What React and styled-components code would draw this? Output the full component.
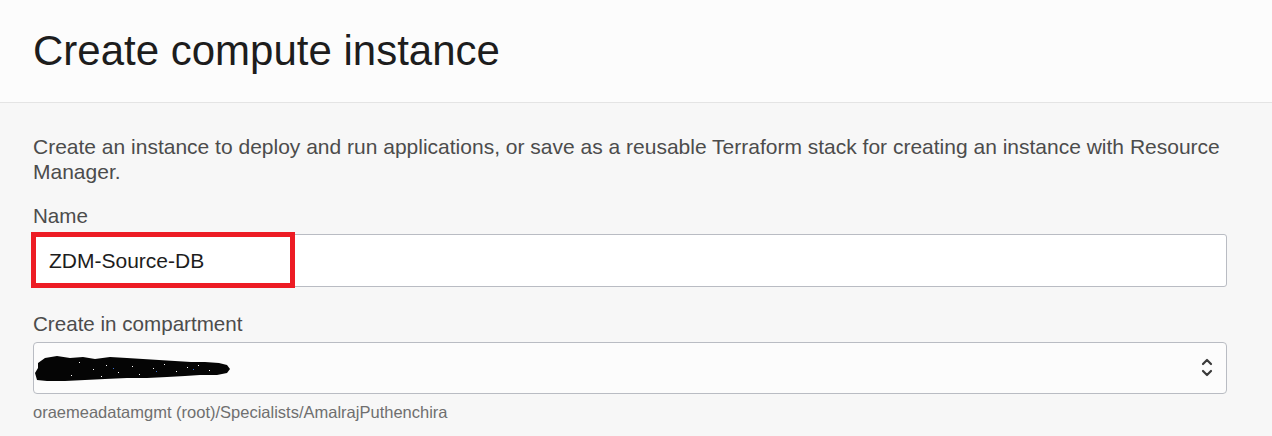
import React from "react";
import styled, { createGlobalStyle } from "styled-components";

const GlobalStyle = createGlobalStyle`
  html, body {
    margin: 0;
    padding: 0;
    background: #f7f7f7;
    font-family: "Liberation Sans", Arial, sans-serif;
  }
`;

const Page = styled.div`
  width: 1272px;
  height: 436px;
  overflow: hidden;
  background: #f7f7f7;
`;

const Header = styled.header`
  height: 102px;
  background: #fcfcfc;
  border-bottom: 1px solid #e4e4e4;
  display: flex;
  align-items: center;
  padding: 0 33px;

  h1 {
    margin: 0;
    font-size: 42px;
    font-weight: 400;
    color: #1d1d1d;
  }
`;

const Body = styled.main`
  padding: 31px 45px 0 33px;
`;

const Intro = styled.p`
  margin: 0 0 19px;
  font-size: 21px;
  line-height: 25px;
  color: #4c4c4c;
`;

const Field = styled.div`
  display: flex;
  flex-direction: column;
  margin-bottom: ${({ $gap }) => $gap || 0}px;
`;

const Label = styled.label`
  font-size: 20.6px;
  line-height: 25px;
  color: #4c4c4c;
  margin-bottom: 6px;
`;

const InputWrap = styled.div`
  position: relative;
`;

const TextInput = styled.input`
  box-sizing: border-box;
  width: 100%;
  height: 53px;
  border: 1px solid #b9bcc3;
  border-radius: 3px;
  background: #fff;
  padding: 0 15px;
  font-family: inherit;
  font-size: 21px;
  color: #1d1d1d;
  outline: none;
`;

const Highlight = styled.div`
  position: absolute;
  left: -2px;
  top: -2px;
  width: 264px;
  height: 56px;
  box-sizing: border-box;
  border: 5px solid #ed1c24;
  pointer-events: none;
`;

const SelectBox = styled.div`
  box-sizing: border-box;
  height: 52px;
  border: 1px solid #b9bcc3;
  border-radius: 4px;
  background: #fcfcfc;
  display: flex;
  align-items: center;
  justify-content: space-between;
  padding: 0 13px 0 1px;
`;

const Help = styled.div`
  margin-top: 8px;
  font-size: 16.5px;
  line-height: 20px;
  color: #6f6f6f;
`;

// redaction scribble over the compartment name
const Redacted = () => (
  <svg width="200" height="30" viewBox="0 0 200 30">
    <path
      d="M3 10 L10 5 L22 3 L35 5 L48 4 L60 6 L75 4 L92 5 L108 6 L124 7 L140 8 L156 9 L170 9 L184 10 L192 12 L195 16 L192 20 L182 22 L165 22 L150 23 L132 24 L112 25 L92 25 L70 26 L50 27 L30 28 L12 28 L2 27 L0 20 L3 15 Z"
      fill="#050505"
    />
    <g fill="#fcfcfc">
      <rect x="44" y="9" width="1" height="1" />
      <rect x="58" y="16" width="1" height="1" />
      <rect x="71" y="12" width="1" height="1" />
      <rect x="83" y="19" width="1" height="1" />
      <rect x="97" y="13" width="1" height="1" />
      <rect x="104" y="21" width="1" height="1" />
      <rect x="118" y="15" width="1" height="1" />
      <rect x="129" y="11" width="1" height="1" />
      <rect x="141" y="18" width="1" height="1" />
      <rect x="152" y="14" width="1" height="1" />
      <rect x="163" y="12" width="1" height="1" />
      <rect x="174" y="17" width="1" height="1" />
      <rect x="36" y="22" width="1" height="1" />
      <rect x="66" y="23" width="1" height="1" />
    </g>
    <g fill="#3b6fd0">
      <rect x="78" y="15" width="1" height="1" />
      <rect x="121" y="18" width="1" height="1" />
      <rect x="158" y="16" width="1" height="1" />
    </g>
  </svg>
);

const UpDown = () => (
  <svg width="12" height="22" viewBox="0 0 12 22" fill="none" stroke="#3a3a3a" strokeWidth="2.2" strokeLinecap="round" strokeLinejoin="round">
    <path d="M2 7 L6 3 L10 7" />
    <path d="M2 14 L6 18 L10 14" />
  </svg>
);

export default function App() {
  return (
    <>
      <GlobalStyle />
      <Page>
        <Header>
          <h1>Create compute instance</h1>
        </Header>
        <Body>
          <Intro>
            Create an instance to deploy and run applications, or save as a reusable Terraform stack for creating an
            instance with Resource Manager.
          </Intro>
          <Field $gap={24}>
            <Label>Name</Label>
            <InputWrap>
              <TextInput defaultValue="ZDM-Source-DB" />
              <Highlight />
            </InputWrap>
          </Field>
          <Field>
            <Label>Create in compartment</Label>
            <SelectBox>
              <Redacted />
              <UpDown />
            </SelectBox>
            <Help>oraemeadatamgmt (root)/Specialists/AmalrajPuthenchira</Help>
          </Field>
        </Body>
      </Page>
    </>
  );
}
